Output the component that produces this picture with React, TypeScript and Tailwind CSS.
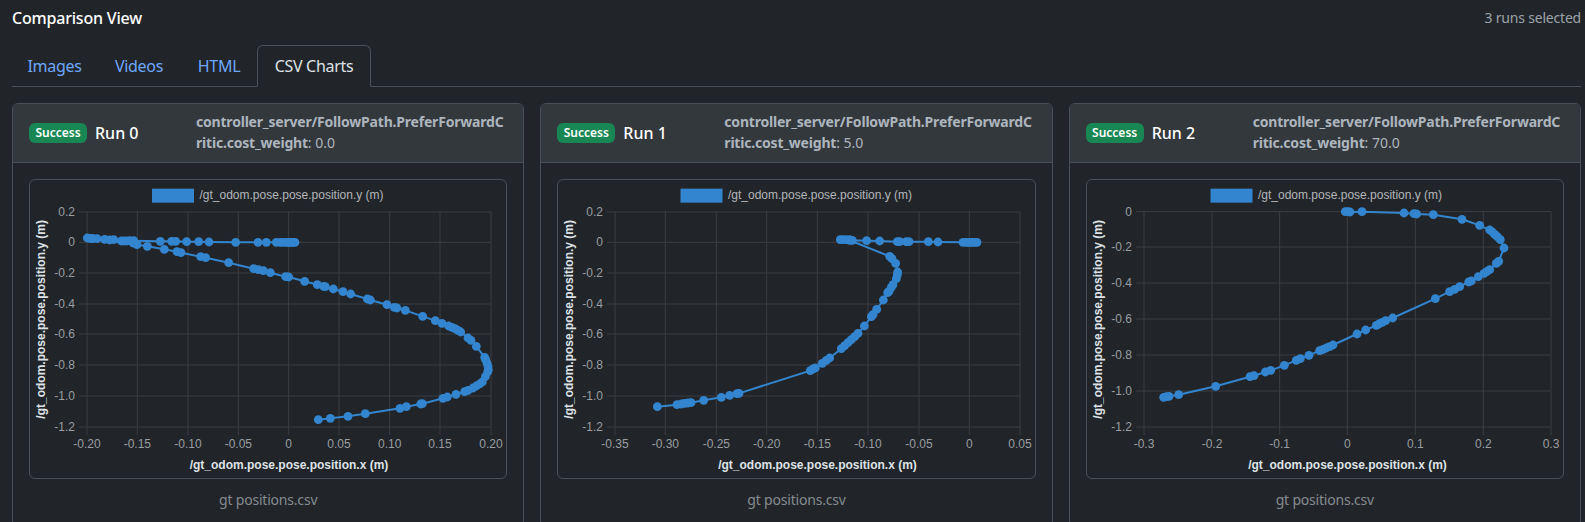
type Pt = [number, number];

// all chart coordinates below are in 3x px, measured from the chart box corner, so divide by 3 when drawing
type ChartDef = {
  name: string;
  value: string;
  originX: number;
  plotLeft: number;
  xTicks: [number, string][];
  yTicks: [number, string][];
  points: Pt[];
};

const yTicksA: [number, string][] = [
  [112, "0.2"],
  [203, "0"],
  [295, "-0.2"],
  [388, "-0.4"],
  [478, "-0.6"],
  [571, "-0.8"],
  [664, "-1.0"],
  [757, "-1.2"],
];

const charts: ChartDef[] = [
  {
    name: "Run 0",
    value: "0.0",
    originX: 28,
    plotLeft: 202,
    xTicks: [
      [202, "-0.20"],
      [353, "-0.15"],
      [505, "-0.10"],
      [656, "-0.05"],
      [807, "0"],
      [958, "0.05"],
      [1110, "0.10"],
      [1261, "0.15"],
      [1414, "0.20"],
    ],
    yTicks: yTicksA,
    points: [
      [826, 203], [820, 203], [815, 203], [810, 203], [805, 203], [800, 203], [790, 203], [782, 203], [770, 203],
      [740, 203], [715, 203], [648, 203], [568, 202], [537, 201], [501, 201], [468, 200], [456, 200], [422, 200],
      [342, 198], [330, 198], [320, 199], [312, 199], [305, 199], [282, 195], [270, 196], [255, 194], [232, 192],
      [220, 192], [212, 191], [203, 190], [215, 192], [340, 205], [352, 210], [383, 215], [434, 224], [472, 231],
      [484, 234], [543, 246], [558, 249], [627, 264], [702, 282], [716, 285], [731, 288], [752, 294], [798, 306],
      [807, 307], [855, 320], [893, 330], [912, 335], [917, 336], [941, 343], [970, 351], [993, 358], [1043, 373],
      [1052, 376], [1102, 390], [1124, 398], [1132, 400], [1157, 407], [1209, 425], [1247, 438], [1267, 446],
      [1287, 454], [1297, 458], [1306, 462], [1315, 467], [1323, 472], [1345, 490], [1354, 497], [1370, 515],
      [1395, 548], [1398, 555], [1402, 565], [1405, 575], [1406, 585], [1404, 592], [1397, 606], [1388, 622],
      [1380, 628], [1370, 634], [1360, 640], [1345, 647], [1335, 651], [1309, 659], [1283, 667], [1270, 671],
      [1208, 687], [1203, 688], [1160, 696], [1141, 701], [1037, 717], [985, 725], [932, 731], [896, 735],
    ],
  },
  {
    name: "Run 1",
    value: "5.0",
    originX: 22,
    plotLeft: 196,
    xTicks: [
      [196, "-0.35"],
      [347, "-0.30"],
      [500, "-0.25"],
      [651, "-0.20"],
      [803, "-0.15"],
      [955, "-0.10"],
      [1108, "-0.05"],
      [1259, "0"],
      [1411, "0.05"],
    ],
    yTicks: yTicksA,
    points: [
      [1282, 203], [1275, 203], [1268, 203], [1262, 203], [1255, 203], [1250, 203], [1240, 203], [1165, 202],
      [1136, 201], [1078, 201], [1070, 201], [1050, 201], [1043, 201], [990, 199], [951, 198], [908, 197],
      [900, 195], [890, 195], [880, 195], [872, 195], [900, 197], [1020, 245], [1027, 252], [1038, 266],
      [1044, 292], [1043, 300], [1040, 312], [1030, 330], [1025, 338], [1018, 350], [1014, 354], [1001, 376],
      [981, 404], [970, 420], [965, 426], [944, 454], [925, 476], [915, 486], [905, 495], [895, 504], [885, 513],
      [875, 522], [840, 550], [830, 557], [818, 566], [797, 580], [790, 583], [782, 588], [568, 656], [562, 657],
      [540, 662], [515, 668], [462, 677], [424, 684], [415, 685], [405, 686], [395, 688], [382, 690], [323, 696],
    ],
  },
  {
    name: "Run 2",
    value: "70.0",
    originX: 49,
    plotLeft: 223,
    xTicks: [
      [223, "-0.3"],
      [427, "-0.2"],
      [630, "-0.1"],
      [833, "0"],
      [1037, "0.1"],
      [1241, "0.2"],
      [1444, "0.3"],
    ],
    yTicks: [
      [111, "0"],
      [217, "-0.2"],
      [325, "-0.4"],
      [433, "-0.6"],
      [541, "-0.8"],
      [649, "-1.0"],
      [757, "-1.2"],
    ],
    points: [
      [827, 111], [835, 111], [841, 112], [877, 111], [1003, 115], [1033, 117], [1041, 118], [1091, 120],
      [1177, 134], [1230, 152], [1260, 166], [1268, 172], [1275, 179], [1283, 186], [1292, 195], [1303, 220],
      [1287, 260], [1280, 266], [1260, 285], [1252, 290], [1243, 296], [1226, 306], [1205, 319], [1197, 322],
      [1170, 336], [1155, 344], [1140, 351], [1097, 372], [969, 430], [948, 438], [938, 443], [928, 448],
      [920, 452], [888, 466], [862, 478], [790, 511], [780, 516], [770, 520], [760, 524], [750, 528], [718, 542],
      [692, 552], [680, 557], [644, 572], [603, 587], [587, 592], [553, 603], [541, 606], [438, 635], [327, 660],
      [298, 665], [290, 666], [282, 668],
    ],
  },
];

const BLUE = "#3385cf";
const GRID = "#3b3e43";
const chartFont = '"Liberation Sans", Arial, sans-serif';

function ScatterChart({ chart }: { chart: ChartDef }) {
  const sx = (x: number) => (x - chart.originX) / 3 - 1;
  const sy = (y: number) => (y - 13) / 3 - 1;
  const left = chart.plotLeft;
  const right = chart.xTicks[chart.xTicks.length - 1][0];
  const top = chart.yTicks[0][0];
  const bottom = 757;
  const middle = (left + right) / 2;
  const line = chart.points.map((p) => `${sx(p[0])},${sy(p[1])}`).join(" ");

  return (
    <svg width="476" height="298" className="block" fontFamily={chartFont} fontSize="12">
      <rect x={sx(middle) - 137} y={sy(42)} width="42" height="14" fill={BLUE} />
      <text x={sx(middle) - 89.5} y={sy(72)} fill="#b4b6b9">
        /gt_odom.pose.pose.position.y (m)
      </text>
      {chart.xTicks.map(([x]) => (
        <line key={x} x1={sx(x)} x2={sx(x)} y1={sy(top)} y2={sy(bottom) + 8} stroke={GRID} />
      ))}
      {chart.yTicks.map(([y]) => (
        <line key={y} x1={sx(left) - 8} x2={sx(right)} y1={sy(y)} y2={sy(y)} stroke={GRID} />
      ))}
      {chart.xTicks.map(([x, label]) => (
        <text key={x} x={sx(x)} y={sy(820)} textAnchor="middle" fill="#9a9da1">
          {label}
        </text>
      ))}
      {chart.yTicks.map(([y, label]) => (
        <text key={y} x={sx(left) - 12} y={sy(y) + 4} textAnchor="end" fill="#9a9da1">
          {label}
        </text>
      ))}
      <text x={sx(middle)} y={sy(884)} textAnchor="middle" fontWeight="700" fill="#dee2e6">
        /gt_odom.pose.pose.position.x (m)
      </text>
      <text
        transform={`translate(${sx(left - 127)} ${sy(434)}) rotate(-90)`}
        textAnchor="middle"
        fontWeight="700"
        fill="#dee2e6"
      >
        /gt_odom.pose.pose.position.y (m)
      </text>
      <polyline points={line} fill="none" stroke={BLUE} strokeWidth="2" />
      {chart.points.map((p, i) => (
        <circle key={i} cx={sx(p[0])} cy={sy(p[1])} r="4.4" fill={BLUE} />
      ))}
    </svg>
  );
}

function RunCard({ chart }: { chart: ChartDef }) {
  return (
    <div className="rounded-md border border-[#495057] overflow-hidden">
      <div className="h-[59px] flex items-center px-4 bg-[#33383d] border-b border-[#495057]">
        <div className="w-[167px] shrink-0 flex items-center gap-2">
          <span className="h-5 w-[58px] pb-px flex items-center justify-center rounded-md bg-[#198754] text-white text-xs font-semibold">
            Success
          </span>
          <span className="pb-px text-white text-base font-medium">{chart.name}</span>
        </div>
        <div className="mb-[2px] text-sm leading-[21px] text-[#adb5bd] whitespace-nowrap">
          <div className="font-bold tracking-[-0.2px]">controller_server/FollowPath.PreferForwardC</div>
          <div>
            <span className="font-bold tracking-[-0.2px]">ritic.cost_weight</span>: {chart.value}
          </div>
        </div>
      </div>
      <div className="p-4">
        <div className="rounded-md border border-[#495057]">
          <ScatterChart chart={chart} />
        </div>
        <p className="mt-[11px] text-center text-sm text-[#858b91] tracking-[-0.2px]">gt positions.csv</p>
      </div>
    </div>
  );
}

export default function App() {
  return (
    <div className="h-[522px] overflow-hidden bg-[#212529] pl-3 pr-1 font-['Noto_Sans',sans-serif]">
      <div className="h-[35px] flex items-center justify-between">
        <h1 className="text-base font-medium text-white tracking-[-0.2px]">Comparison View</h1>
        <span className="text-sm text-[#9ca3a9] tracking-[-0.2px]">3 runs selected</span>
      </div>
      <div className="mt-[10px] flex border-b border-[#495057] text-base text-[#6ea8fe] tracking-[-0.3px]">
        <a className="-mb-px w-[85px] py-2 border border-transparent leading-6 text-center">Images</a>
        <a className="-mb-px w-[84px] py-2 border border-transparent leading-6 text-center">Videos</a>
        <a className="-mb-px w-[76px] py-2 border border-transparent leading-6 text-center">HTML</a>
        <a className="-mb-px w-[114px] py-2 leading-6 text-center rounded-t-md border border-[#495057] border-b-[#212529] text-[#dee2e6]">
          CSV Charts
        </a>
      </div>
      <div className="mt-4 grid grid-cols-3 gap-4">
        {charts.map((c) => (
          <RunCard key={c.name} chart={c} />
        ))}
      </div>
    </div>
  );
}
